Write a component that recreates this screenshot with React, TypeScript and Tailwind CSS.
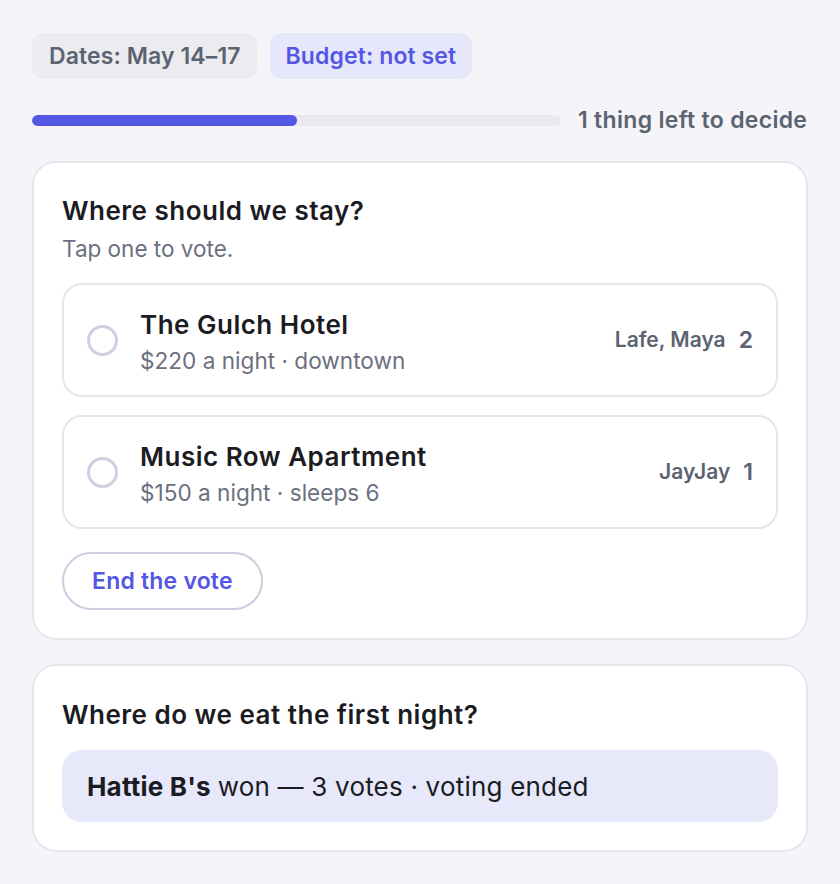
import React from "react";

type Option = {
  id: number;
  name: string;
  detail: string;
  voters: string;
  count: number;
};

const OPTIONS: Option[] = [
  { id: 1, name: "The Gulch Hotel", detail: "$220 a night · downtown", voters: "Lafe, Maya", count: 2 },
  { id: 2, name: "Music Row Apartment", detail: "$150 a night · sleeps 6", voters: "JayJay", count: 1 },
];

const App: React.FC = () => {
  const progress = 50;

  return (
    <div
      className="min-h-screen bg-[#f4f4f9] px-8 pt-[33px] pb-8 text-[#1b1c23]"
      style={{ fontFamily: "Inter, 'Noto Sans', sans-serif" }}
    >
      {/* Summary chips */}
      <div className="flex items-center gap-[13px]">
        <span className="flex h-[46px] items-center rounded-[12px] bg-[#ebebf0] pl-[17px] pr-[16px] text-[23px] font-semibold tracking-[0.1px] text-[#5c6370]">
          Dates: May 14–17
        </span>
        <span className="flex h-[46px] items-center rounded-[12px] bg-[#e7e7fc] px-[16px] text-[23px] font-semibold tracking-[0.1px] text-[#5457e4]">
          Budget: not set
        </span>
      </div>

      {/* Progress */}
      <div className="mt-[25px] flex h-[32px] items-center gap-[17px]">
        <div className="h-[11px] w-[529px] overflow-hidden rounded-full bg-[#e9e9ef]">
          <div className="h-full rounded-full bg-[#5457e4]" style={{ width: `${progress}%` }} />
        </div>
        <span className="text-[23px] font-semibold tracking-[0.3px] text-[#5c6370]">
          1 thing left to decide
        </span>
      </div>

      {/* Open vote */}
      <div className="mt-[25px] rounded-[24px] border-2 border-[#e6e6ef] bg-white px-[28px] pt-[32px] pb-[28px]">
        <div className="text-[26px] font-semibold leading-[32px] tracking-[0.5px]">Where should we stay?</div>
        <div className="mt-[7px] text-[22.5px] leading-[30px] text-[#6b7080]">Tap one to vote.</div>

        <div className="mt-[19px] flex flex-col gap-[18px]">
          {OPTIONS.map((o) => (
            <button
              key={o.id}
              className="flex h-[114px] w-full items-center rounded-[20px] border-2 border-[#e6e6ef] bg-white pl-[23px] pr-[23px] text-left"
            >
              <span className="h-[31px] w-[31px] shrink-0 rounded-full border-[3px] border-[#cfcfe1]" />
              <span className="ml-[22px] flex min-w-0 flex-col pt-[4px]">
                <span className="text-[26px] font-semibold leading-[32px] tracking-[0.5px] text-[#1b1c23]">
                  {o.name}
                </span>
                <span className="mt-[5px] text-[22.6px] leading-[30px] text-[#6b7080]">{o.detail}</span>
              </span>
              <span className="ml-auto flex items-center gap-[13px] text-[#5c6370]">
                <span className="text-[21px] font-semibold">{o.voters}</span>
                <span className="text-[23px] font-semibold">{o.count}</span>
              </span>
            </button>
          ))}
        </div>

        <button className="mt-[23px] flex h-[58px] items-center rounded-full border-2 border-[#cdcde0] px-[28px] text-[23px] font-semibold tracking-[0.2px] text-[#5457e4]">
          End the vote
        </button>
      </div>

      {/* Closed vote */}
      <div className="mt-[24px] rounded-[24px] border-2 border-[#e6e6ef] bg-white px-[28px] pt-[33px] pb-[28px]">
        <div className="text-[26px] font-semibold leading-[32px] tracking-[0.5px]">
          Where do we eat the first night?
        </div>
        <div className="mt-[19px] flex h-[72px] items-center rounded-[20px] bg-[#e8e8fb] px-[25px] text-[26px] tracking-[0.2px]">
          <span className="font-bold">Hattie B's</span>
          <span className="ml-[7px]">won — 3 votes · voting ended</span>
        </div>
      </div>
    </div>
  );
};

export default App;
